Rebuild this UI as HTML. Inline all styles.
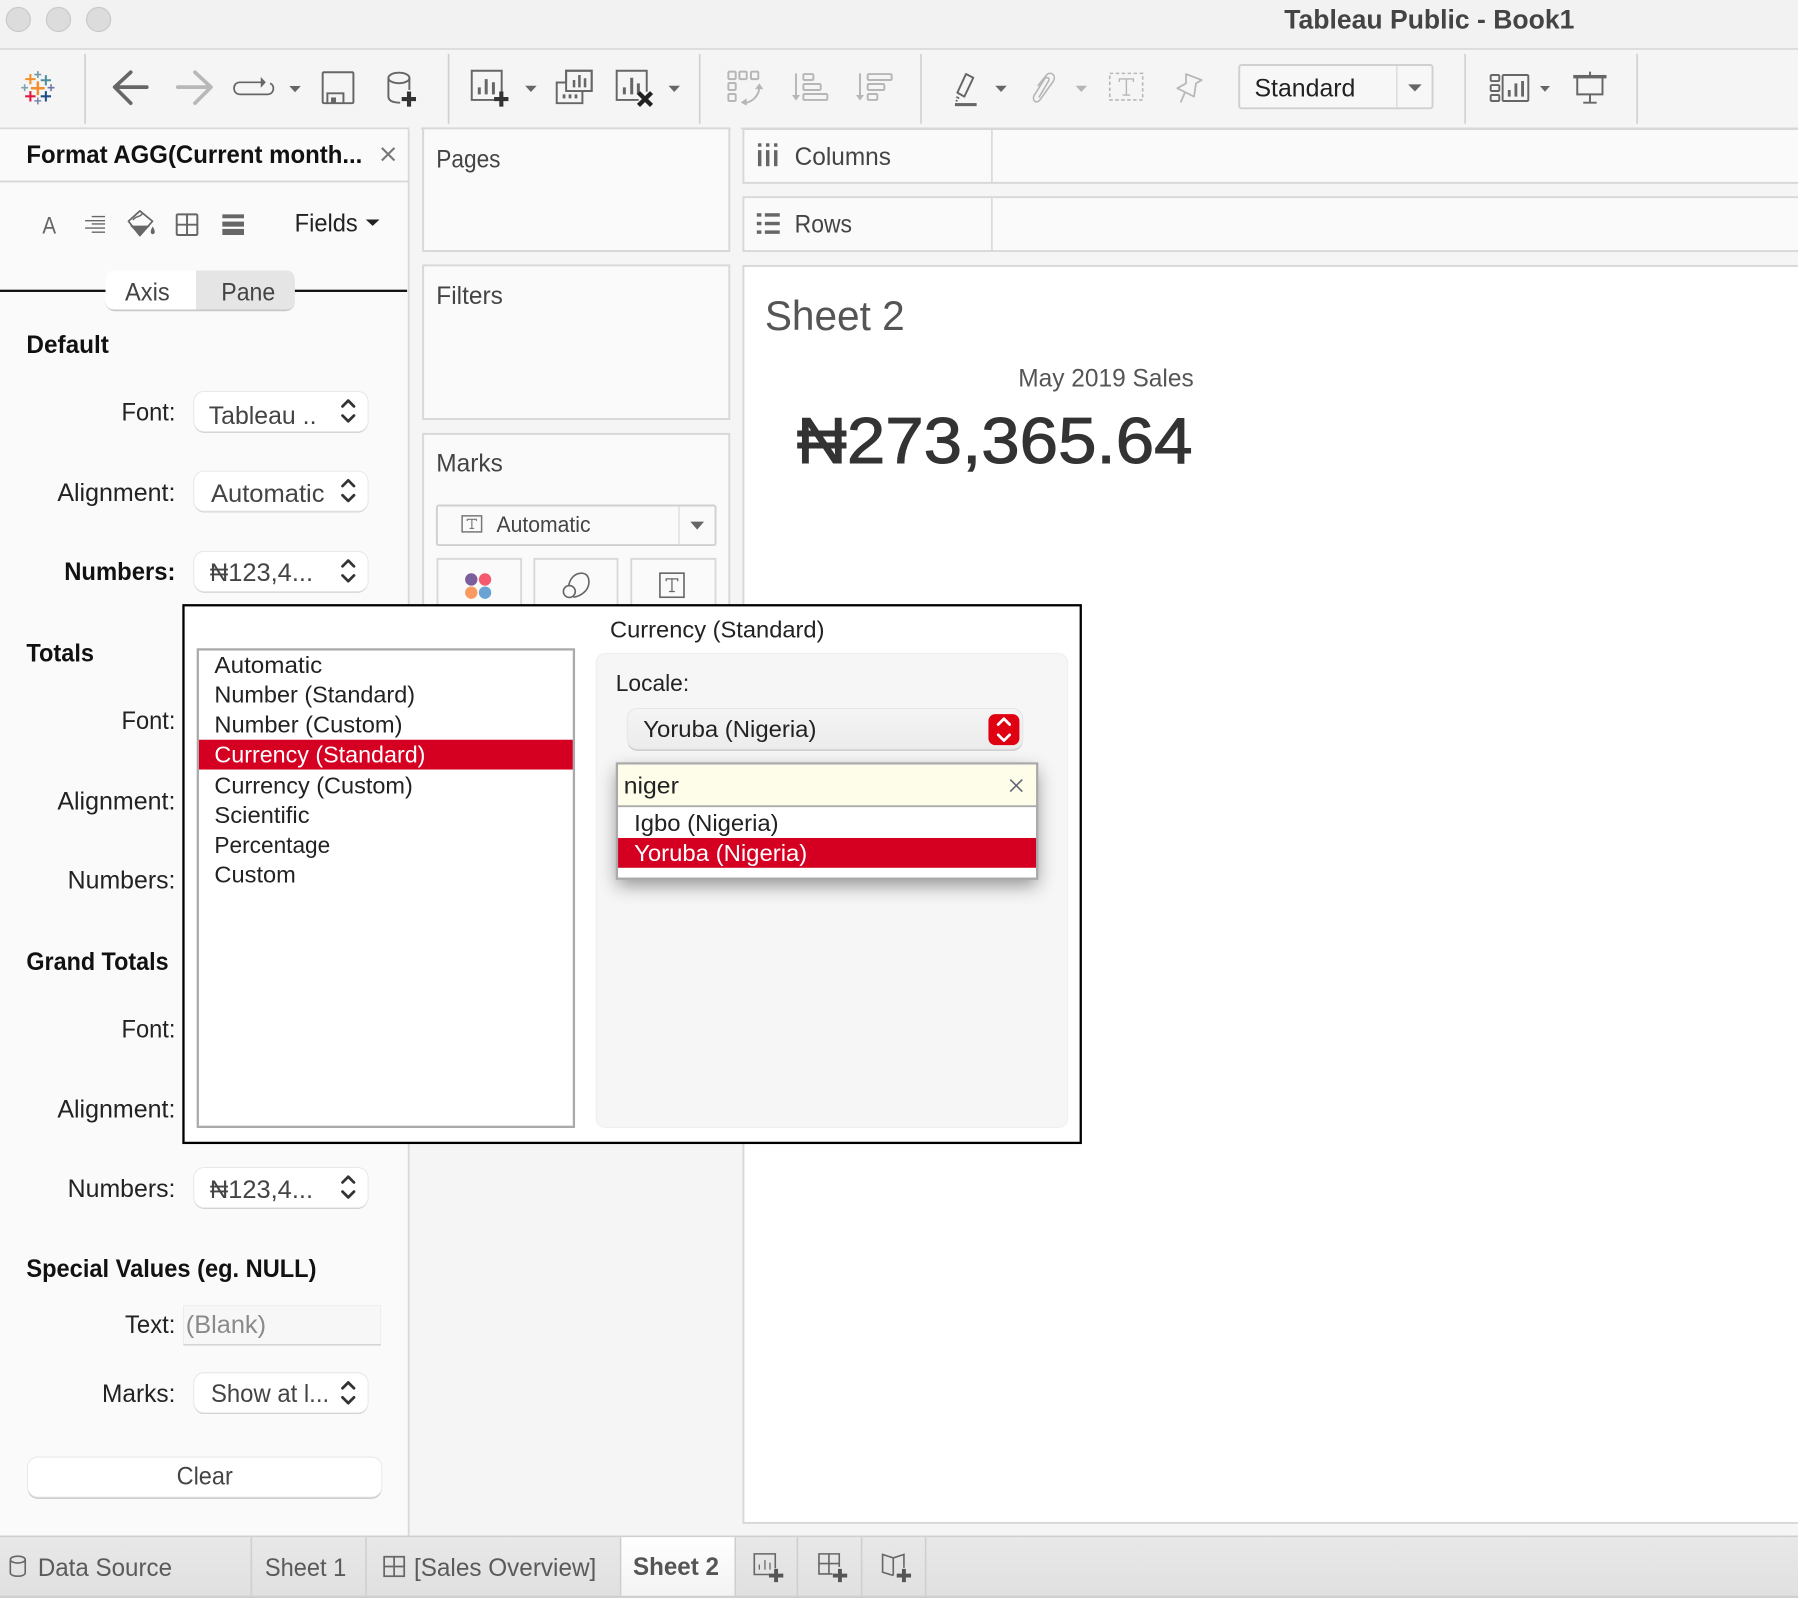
<!DOCTYPE html>
<html lang="en">
<head>
<meta charset="utf-8">
<title>Tableau Public - Book1</title>
<style>
html,body{margin:0;padding:0;background:#f5f5f5;}
svg{display:block;}
text{font-family:"Liberation Sans","DejaVu Sans",sans-serif;font-size:22px;fill:#333;}
.b{font-weight:700;fill:#111;}
.l{fill:#222;}
.v{fill:#444;}
.d{font-size:20.5px;fill:#222;}
.t{fill:#5a5a5a;}
</style>
</head>
<body>
<svg xmlns="http://www.w3.org/2000/svg" width="1798" height="1598" viewBox="0 0 1568 1394" preserveAspectRatio="none">
<defs>
  <linearGradient id="tb" x1="0" y1="0" x2="0" y2="1"><stop offset="0" stop-color="#e8e8e8"/><stop offset="1" stop-color="#e0e0e0"/></linearGradient>
  <linearGradient id="ac" x1="0" y1="0" x2="0" y2="1"><stop offset="0" stop-color="#fff"/><stop offset="1" stop-color="#f3f3f3"/></linearGradient>
  <linearGradient id="loc" x1="0" y1="0" x2="0" y2="1"><stop offset="0" stop-color="#f4f4f4"/><stop offset="1" stop-color="#ececec"/></linearGradient>
  <filter id="sh" x="-15%" y="-20%" width="130%" height="160%"><feDropShadow dx="0" dy="6" stdDeviation="8" flood-color="#000" flood-opacity=".4"/></filter>
  <g id="chev" fill="none" stroke="#333" stroke-width="2.400" stroke-linecap="round" stroke-linejoin="round"><path d="M-5 -4L0 -9L5 -4"/><path d="M-5 4L0 9L5 4"/></g>
  <g id="sel"><rect x="169" y="1" width="152" height="35" rx="9" fill="#c9c9c9"/><rect x="169" y="0" width="152" height="35" rx="9" fill="#fff" stroke="#e6e6e6" stroke-width=".8"/></g>
</defs>

<!-- base -->
<rect width="1568" height="1394" fill="#f5f5f5"/>
<rect width="1568" height="42" fill="#f2f2f2"/>
<rect y="42" width="1568" height="1.400" fill="#d8d8d8"/>
<circle cx="16" cy="17" r="10.500" fill="#dcdcdc" stroke="#c8c8c8"/>
<circle cx="51" cy="17" r="10.500" fill="#dcdcdc" stroke="#c8c8c8"/>
<circle cx="86" cy="17" r="10.500" fill="#dcdcdc" stroke="#c8c8c8"/>
<text x="1120" y="25" class="b" style="fill:#444;font-size:23px" textLength="253" lengthAdjust="spacingAndGlyphs">Tableau Public - Book1</text>

<!-- toolbar separators -->
<g fill="#d0d0d0">
<rect x="73.500" y="47" width="1.400" height="61"/><rect x="390.500" y="47" width="1.400" height="61"/><rect x="609.500" y="47" width="1.400" height="61"/><rect x="802.500" y="47" width="1.400" height="61"/><rect x="1277" y="47" width="1.400" height="61"/><rect x="1427" y="47" width="1.400" height="61"/>
</g>

<!-- logo -->
<g fill="none">
  <path d="M33 71V83M27 77H39" stroke="#f28e2b" stroke-width="2.200"/>
  <path d="M26.500 64.500V73.500M22 69H31" stroke="#f28e2b" stroke-width="1.800"/>
  <path d="M40 65.500V74.500M35.500 70H44.500" stroke="#4e8fa0" stroke-width="1.800"/>
  <path d="M26.500 79.500V88.500M22 84H31" stroke="#e0173f" stroke-width="1.800"/>
  <path d="M40 79.500V88.500M35.500 84H44.500" stroke="#1f4f8b" stroke-width="1.800"/>
  <path d="M33 62V68M30 65H36" stroke="#6f9aaa" stroke-width="1.400"/>
  <path d="M21.500 73.500V79.500M18.500 76.500H24.500" stroke="#7ba3b0" stroke-width="1.400"/>
  <path d="M44.500 73.500V79.500M41.500 76.500H47.500" stroke="#6f75a8" stroke-width="1.400"/>
  <path d="M33 85V91M30 88H36" stroke="#7d84ad" stroke-width="1.400"/>
</g>

<!-- toolbar icons: dark -->
<g fill="none" stroke="#666" stroke-width="1.700">
  <path d="M128 76H101M114 63L100 76L114 90" stroke-width="3.200" stroke-linecap="round" stroke-linejoin="round"/>
  <path d="M155 76H183M170 63L184 76L170 90" stroke="#b8b8b8" stroke-width="3.200" stroke-linecap="round" stroke-linejoin="round"/>
  <path d="M229 71.800H209.300C206 71.800 204.100 74 204.100 77C204.100 80 206 82.300 209.300 82.300H233.500C236.500 82.300 238.400 80 238.400 77C238.400 75 237.500 73.500 235.500 72.700" stroke-width="1.500"/>
  <rect x="281.400" y="63" width="26.800" height="27" rx="1"/>
  <path d="M285.500 90V81.400H299.500V90"/>
  <ellipse cx="347.900" cy="68" rx="9.200" ry="4.600"/><path d="M338.700 68V84C338.700 87.500 342 89.600 349 89.600M357 68V78.500"/>
  <path d="M431 87.200H411.400V61.700H437.500V81"/>
  <path d="M493.700 72V61.700H516V79.400H507.900"/>
  <path d="M493.700 72H485.500V90H507.900V79.400"/>
  <rect x="493.700" y="61.700" width="22.300" height="17.700"/>
  <path d="M557 87.200H537.800V61.700H564V80"/>
</g>
<path d="M227.400 67.200L231.800 71.800L227.400 76.500Z" fill="#666"/>
<rect x="288.700" y="85" width="4.300" height="5" fill="#666"/>
<g stroke="#666" stroke-width="2.600" fill="none">
  <path d="M418 82.300V76.200M424 82.300V69M430.300 82.300V71.800"/>
  <path d="M500.600 76.200V69.800M505.300 76.200V65.400M510.200 76.200V68.300" stroke-width="2.200"/>
  <path d="M491.900 82.300V85.800M497.100 82.300V85.800M502.300 82.300V85.800" stroke-width="2.400"/>
  <path d="M544.500 82.300V76.200M550.900 82.300V67.800M556.700 82.300V72.700"/>
</g>
<path d="M356.700 79.800V93M350.300 86.400H362.800" stroke="#333" stroke-width="3.600"/>
<path d="M437.200 79.800V93M430.900 86.400H443.400" stroke="#333" stroke-width="3.600"/>
<path d="M556.800 80.800L568.200 92M568.200 80.800L556.800 92" stroke="#222" stroke-width="3.800"/>
<g fill="#666">
  <path d="M252.300 75H262.300L257.300 80.500Z"/><path d="M458 74.800H468L463 80.300Z"/><path d="M583 74.800H593L588 80.300Z"/><path d="M868 74.800H878L873 80.300Z"/><path d="M1343 75H1351.700L1347.300 80Z"/>
  <path d="M938 74.800H948L943 80.300Z" fill="#b5b5b5"/>
</g>
<!-- toolbar icons: disabled -->
<g fill="none" stroke="#b6b6b6" stroke-width="1.700">
  <rect x="635.200" y="62.500" width="6.400" height="6.500" rx="1"/><rect x="644.800" y="62.500" width="6.400" height="6.500" rx="1"/><rect x="654.900" y="62.500" width="6.400" height="6.500" rx="1"/><rect x="635.200" y="72.400" width="6.400" height="6.100" rx="1"/><rect x="635.200" y="82" width="6.400" height="6.100" rx="1"/>
  <path d="M662.200 76C662 83 657 88.500 649.700 90"/>
  <path d="M694.200 64V84"/><rect x="700.600" y="64.600" width="8.700" height="5.200" rx="1"/><rect x="700.600" y="73.300" width="15.100" height="5.200" rx="1"/><rect x="700.600" y="82" width="20.900" height="5.200" rx="1"/>
  <path d="M750 64V84"/><rect x="756.700" y="64.600" width="20.900" height="5.200" rx="1"/><rect x="756.700" y="73.300" width="14.500" height="5.200" rx="1"/><rect x="756.700" y="82" width="8.400" height="5.200" rx="1"/>
  <path d="M906 85L914.500 70.500C916 67.500 912 66.500 910.500 69.500L902 83C899.500 88 904 91 907 87L918.500 71C921.500 66 917 62 913 65L905 75" stroke-width="1.400"/>
  <rect x="967.800" y="64" width="28.700" height="23.200" stroke-dasharray="3 2.200" stroke-width="1.400"/>
  <path d="M976.200 71.500V68.900H988.400V71.500M982.300 68.900V82.900M979 82.900H985.600" stroke-width="1.200"/>
  <path d="M1034.300 64.600L1048 69.800L1043 72.700L1041.300 84.300L1026.700 77L1034.300 72.700Z" stroke-width="1.500" stroke-linejoin="round"/>
  <path d="M1033.400 80.600L1029.600 89.300" stroke-width="1.500"/>
</g>
<path d="M662.200 72.700L658.400 77.700H665.700Z" fill="#b6b6b6"/><path d="M645.900 89.300L651.200 85.800V92.200Z" fill="#b6b6b6"/>
<path d="M694.200 87.800L690.700 82.900H697.700Z" fill="#b6b6b6"/><path d="M750 87.800L746.500 82.900H753.500Z" fill="#b6b6b6"/>
<!-- highlighter -->
<path d="M842.400 64.600L848.800 67.800L841 84.300L834.900 80.800Z" fill="none" stroke="#666" stroke-width="1.700" stroke-linejoin="round"/>
<path d="M834 84.500L836.500 85.800M833.500 87.500L835 88.200" stroke="#666" stroke-width="1.500"/>
<rect x="832.800" y="89.900" width="18.900" height="2.700" fill="#666"/>
<!-- show me -->
<g fill="none" stroke="#666" stroke-width="1.700">
  <rect x="1300" y="65.400" width="7.500" height="5.300" rx="1"/><rect x="1300" y="74.200" width="7.500" height="5.200" rx="1"/><rect x="1300" y="82.900" width="7.500" height="5.200" rx="1"/>
  <rect x="1310.400" y="65.400" width="22.400" height="22.700" rx="1"/>
  <path d="M1316.200 84.300V78.500M1322 84.300V72.700M1327.800 84.300V70.700" stroke-width="2.500"/>
  <path d="M1375.500 68V82.300H1397.500V68"/><path d="M1386.600 82.300V89.600M1380.700 89.600H1392.400"/>
</g>
<rect x="1372" y="65.400" width="29" height="3" fill="#666"/><rect x="1385.800" y="62.500" width="1.700" height="3" fill="#666"/>
<!-- Standard -->
<rect x="1080.700" y="56.700" width="168.600" height="37.800" rx="2" fill="#f7f7f7" stroke="#d0d0d0" stroke-width="1.700"/>
<rect x="1217.500" y="57.500" width="1.300" height="36.500" fill="#dcdcdc"/>
<path d="M1228 73.600H1239.800L1233.900 79.800Z" fill="#666"/>
<text x="1094" y="84" class="l" textLength="88" lengthAdjust="spacingAndGlyphs">Standard</text>

<!-- toolbar bottom / panel tops -->
<g fill="#d8d8d8"><rect x="0" y="111.200" width="357" height="1.600"/><rect x="367" y="111.200" width="270" height="1.600"/><rect x="646" y="111.200" width="922" height="1.600"/></g>

<!-- format pane -->
<rect x="0" y="112.800" width="356" height="1227" fill="#fafafa"/>
<rect x="355.600" y="113" width="1.600" height="1227" fill="#d8d8d8"/>
<rect x="0" y="157.500" width="356" height="1.600" fill="#d8d8d8"/>
<text x="23" y="142" class="b" textLength="293" lengthAdjust="spacingAndGlyphs">Format AGG(Current month...</text>
<path d="M333 129L344 140M344 129L333 140" stroke="#777" stroke-width="1.800"/>
<text x="37" y="203.500" style="font-size:21px;fill:#666" textLength="12" lengthAdjust="spacingAndGlyphs">A</text>
<path d="M80 188.900H91.600M74.200 192.500H91.600M80 195.400H91.600M74.200 199H91.600M80 202.600H91.600" stroke="#666" fill="none" stroke-width="1.200"/>
<path d="M112 193L122 184L133 193L122 205.500Z" fill="#fafafa" stroke="#666" stroke-width="1.500" stroke-linejoin="round"/>
<path d="M113.400 196.800H130.900L122.100 205.500Z" fill="#666"/>
<path d="M116 192C118 188 122 190 124 186.500" fill="none" stroke="#666" stroke-width="1.300"/>
<path d="M133.200 197.700C131 201 130.800 204.300 133.200 204.300C135.600 204.300 135.400 201 133.200 197.700Z" fill="#666"/>
<g fill="none" stroke="#666" stroke-width="1.700"><rect x="154.100" y="187" width="18" height="18" rx="1"/><path d="M163.100 187V205M154.100 196H172.100"/></g>
<g fill="#666"><rect x="193.900" y="187" width="18.900" height="3.400"/><rect x="193.900" y="193.300" width="18.900" height="4.400"/><rect x="193.900" y="199.700" width="18.900" height="5.300"/></g>
<text x="257" y="202" class="l" textLength="55" lengthAdjust="spacingAndGlyphs">Fields</text>
<path d="M319 191.500H331L325 197Z" fill="#222"/>

<!-- axis/pane -->
<rect x="0" y="252.700" width="92" height="2" fill="#111"/><rect x="257" y="252.700" width="98" height="2" fill="#111"/>
<rect x="92" y="236.500" width="165" height="35" rx="8" fill="#c8c8c8"/>
<path d="M171 236H100Q92 236 92 244V262Q92 270 100 270H171Z" fill="#fff"/>
<path d="M171 236H249Q257 236 257 244V262Q257 270 249 270H171Z" fill="#e5e5e5"/>
<text x="109" y="262" class="v" textLength="39" lengthAdjust="spacingAndGlyphs">Axis</text>
<text x="193" y="262" class="v" textLength="47" lengthAdjust="spacingAndGlyphs">Pane</text>

<text x="23" y="308" class="b" textLength="72" lengthAdjust="spacingAndGlyphs">Default</text>
<text x="106" y="367" class="l" textLength="47" lengthAdjust="spacingAndGlyphs">Font:</text>
<use href="#sel" y="341.500"/><text x="182" y="370" class="v" textLength="94" lengthAdjust="spacingAndGlyphs">Tableau ..</text><use href="#chev" x="303.700" y="358.500"/>
<text x="50" y="437" class="l" textLength="103" lengthAdjust="spacingAndGlyphs">Alignment:</text>
<use href="#sel" y="411"/><text x="184" y="438" class="v" textLength="99" lengthAdjust="spacingAndGlyphs">Automatic</text><use href="#chev" x="303.700" y="428"/>
<text x="56" y="506" class="b" textLength="97" lengthAdjust="spacingAndGlyphs">Numbers:</text>
<use href="#sel" y="481"/><text x="183" y="507" class="v" textLength="90" lengthAdjust="spacingAndGlyphs">₦123,4...</text><use href="#chev" x="303.700" y="498"/>

<text x="23" y="577" class="b" textLength="59" lengthAdjust="spacingAndGlyphs">Totals</text>
<text x="106" y="636" class="l" textLength="47" lengthAdjust="spacingAndGlyphs">Font:</text>
<text x="50" y="706" class="l" textLength="103" lengthAdjust="spacingAndGlyphs">Alignment:</text>
<text x="59" y="775" class="l" textLength="94" lengthAdjust="spacingAndGlyphs">Numbers:</text>
<text x="23" y="846" class="b" textLength="124" lengthAdjust="spacingAndGlyphs">Grand Totals</text>
<text x="106" y="905" class="l" textLength="47" lengthAdjust="spacingAndGlyphs">Font:</text>
<text x="50" y="975" class="l" textLength="103" lengthAdjust="spacingAndGlyphs">Alignment:</text>
<text x="59" y="1044" class="l" textLength="94" lengthAdjust="spacingAndGlyphs">Numbers:</text>
<use href="#sel" y="1018.500"/><text x="183" y="1045" class="v" textLength="90" lengthAdjust="spacingAndGlyphs">₦123,4...</text><use href="#chev" x="303.700" y="1035.500"/>

<text x="23" y="1114" class="b" textLength="253" lengthAdjust="spacingAndGlyphs">Special Values (eg. NULL)</text>
<text x="109" y="1163" class="l" textLength="44" lengthAdjust="spacingAndGlyphs">Text:</text>
<rect x="160" y="1139" width="172" height="34" fill="#f7f7f7" stroke="#ececec" stroke-width=".8"/><rect x="160" y="1172.700" width="172" height="1" fill="#c8c8c8"/>
<text x="162" y="1163" style="fill:#8a8a8a" textLength="70" lengthAdjust="spacingAndGlyphs">(Blank)</text>
<text x="89" y="1223" class="l" textLength="64" lengthAdjust="spacingAndGlyphs">Marks:</text>
<use href="#sel" y="1197.500"/><text x="184" y="1223" class="v" textLength="103" lengthAdjust="spacingAndGlyphs">Show at l...</text><use href="#chev" x="303.700" y="1215"/>
<rect x="24" y="1272" width="309" height="35.500" rx="9" fill="#c9c9c9"/><rect x="24" y="1271" width="309" height="35" rx="9" fill="#fff" stroke="#e6e6e6" stroke-width=".8"/>
<text x="154" y="1295" class="v" textLength="49" lengthAdjust="spacingAndGlyphs">Clear</text>

<!-- shelves -->
<g fill="#fafafa" stroke="#d8d8d8" stroke-width="1.700">
  <rect x="369" y="112" width="267" height="107"/>
  <rect x="369" y="231.500" width="267" height="134"/>
  <rect x="369" y="378.500" width="267" height="170"/>
  <path d="M1570 112.500H648.300V159.500H1570Z"/>
  <path d="M1570 172H648.300V219H1570Z"/>
</g>
<rect x="864.300" y="113" width="1.400" height="46" fill="#d8d8d8"/><rect x="864.300" y="173" width="1.400" height="46" fill="#d8d8d8"/>
<text x="380.500" y="146" class="v" textLength="56" lengthAdjust="spacingAndGlyphs">Pages</text>
<text x="380.500" y="265" class="v" textLength="58" lengthAdjust="spacingAndGlyphs">Filters</text>
<text x="380.500" y="411.500" class="v" textLength="58" lengthAdjust="spacingAndGlyphs">Marks</text>
<g fill="#666"><rect x="661" y="125" width="3" height="3"/><rect x="668" y="125" width="3" height="3"/><rect x="675" y="125" width="3" height="3"/><rect x="661" y="131" width="3" height="14"/><rect x="668" y="131" width="3" height="14"/><rect x="675" y="131" width="3" height="14"/>
<rect x="660" y="186" width="4" height="3"/><rect x="667" y="186" width="13" height="3"/><rect x="660" y="193.500" width="4" height="3"/><rect x="667" y="193.500" width="13" height="3"/><rect x="660" y="201" width="4" height="3"/><rect x="667" y="201" width="13" height="3"/></g>
<text x="693" y="144" class="v" textLength="84" lengthAdjust="spacingAndGlyphs">Columns</text>
<text x="693" y="203" class="v" textLength="50" lengthAdjust="spacingAndGlyphs">Rows</text>

<!-- marks controls -->
<rect x="381" y="441" width="243" height="34.500" rx="1.500" fill="#fafafa" stroke="#d0d0d0" stroke-width="1.700"/>
<rect x="591.500" y="442" width="1.300" height="33" fill="#e0e0e0"/>
<rect x="403" y="450" width="17" height="14" fill="none" stroke="#777" stroke-width="1.300"/>
<path d="M407.500 454.500V453H415.500V454.500M411.500 453V461M409.500 461H413.500" stroke="#777" stroke-width="1" fill="none"/>
<text x="433" y="464" style="font-size:19px;fill:#444" textLength="82" lengthAdjust="spacingAndGlyphs">Automatic</text>
<path d="M602 455H614L608 462Z" fill="#666"/>
<g fill="#fafafa" stroke="#d8d8d8" stroke-width="1.600"><rect x="381.500" y="487.500" width="73" height="60"/><rect x="466" y="487.500" width="72.500" height="60"/><rect x="550.500" y="487.500" width="73.500" height="60"/></g>
<circle cx="411" cy="505.500" r="5.400" fill="#7b5e9a"/><circle cx="423" cy="505.500" r="5.400" fill="#f4596f"/><circle cx="411" cy="517" r="5.400" fill="#f99b61"/><circle cx="423" cy="517" r="5.400" fill="#6aa2d3"/>
<g fill="none" stroke="#666" stroke-width="1.400"><path d="M496 511C497 504 502 500 507 500C512 500 514 504 513.500 509C513 515 507 520 500 521"/><circle cx="496.500" cy="516" r="5.200"/>
<rect x="575.500" y="500" width="21" height="21"/><path d="M581 507V505H591V507M586 505V516M583.500 516H588.500" stroke-width="1.100"/></g>

<!-- view -->
<rect x="648.300" y="232" width="921.700" height="1096.500" fill="#fff" stroke="#d8d8d8" stroke-width="1.700"/>
<text x="667" y="288" style="font-size:36px;fill:#555" textLength="122" lengthAdjust="spacingAndGlyphs">Sheet 2</text>
<text x="888" y="337" style="fill:#555" textLength="153" lengthAdjust="spacingAndGlyphs">May 2019 Sales</text>
<text x="695" y="404" style="font-size:57px;fill:#333;stroke:#333;stroke-width:.9" textLength="345" lengthAdjust="spacingAndGlyphs">₦273,365.64</text>

<!-- dialog -->
<rect x="160" y="528" width="782.500" height="469" fill="#fff" stroke="#000" stroke-width="2"/>
<text x="532" y="556" class="d" textLength="187" lengthAdjust="spacingAndGlyphs">Currency (Standard)</text>
<rect x="172.500" y="566.500" width="328" height="416.500" fill="#fff" stroke="#aaa" stroke-width="2"/>
<rect x="173.500" y="645.300" width="326" height="26" fill="#d50021"/>
<text x="187" y="587" class="d" textLength="94" lengthAdjust="spacingAndGlyphs">Automatic</text>
<text x="187" y="613" class="d" textLength="175" lengthAdjust="spacingAndGlyphs">Number (Standard)</text>
<text x="187" y="639" class="d" textLength="164" lengthAdjust="spacingAndGlyphs">Number (Custom)</text>
<text x="187" y="665" class="d" style="fill:#fff" textLength="184" lengthAdjust="spacingAndGlyphs">Currency (Standard)</text>
<text x="187" y="692" class="d" textLength="173" lengthAdjust="spacingAndGlyphs">Currency (Custom)</text>
<text x="187" y="718" class="d" textLength="83" lengthAdjust="spacingAndGlyphs">Scientific</text>
<text x="187" y="744" class="d" textLength="101" lengthAdjust="spacingAndGlyphs">Percentage</text>
<text x="187" y="770" class="d" textLength="71" lengthAdjust="spacingAndGlyphs">Custom</text>
<rect x="520" y="570" width="411" height="413.500" rx="8" fill="#f6f6f6" stroke="#efefef"/>
<text x="537" y="603" class="d" textLength="64" lengthAdjust="spacingAndGlyphs">Locale:</text>
<rect x="547" y="619" width="345" height="36" rx="9" fill="#c9c9c9"/>
<rect x="547" y="618" width="345" height="35.500" rx="9" fill="url(#loc)" stroke="#e4e4e4" stroke-width=".8"/>
<text x="561" y="643" class="d" textLength="151" lengthAdjust="spacingAndGlyphs">Yoruba (Nigeria)</text>
<rect x="862" y="623" width="27" height="27" rx="6" fill="#df0011"/>
<path d="M870.500 632L875.500 627L880.500 632M870.500 641L875.500 646L880.500 641" fill="none" stroke="#fff" stroke-width="2.400" stroke-linecap="round" stroke-linejoin="round"/>
<rect x="538" y="666" width="366.500" height="100.500" fill="#fff" filter="url(#sh)"/>
<rect x="538" y="666" width="366.500" height="100.500" fill="#fff" stroke="#aaa" stroke-width="2"/>
<rect x="539" y="667" width="364.500" height="36" fill="#fdfde9"/>
<rect x="539" y="702.500" width="364.500" height="1.600" fill="#aaa"/>
<text x="544" y="692" class="d" textLength="48" lengthAdjust="spacingAndGlyphs">niger</text>
<path d="M881 680L891.500 690.500M891.500 680L881 690.500" stroke="#667" stroke-width="1.400"/>
<text x="553" y="725" class="d" textLength="126" lengthAdjust="spacingAndGlyphs">Igbo (Nigeria)</text>
<rect x="539" y="731" width="364.500" height="26" fill="#d50021"/>
<text x="553" y="751" class="d" style="fill:#fff" textLength="151" lengthAdjust="spacingAndGlyphs">Yoruba (Nigeria)</text>

<!-- tab bar -->
<rect x="0" y="1340" width="1568" height="54" fill="url(#tb)"/>
<rect x="0" y="1339.500" width="1568" height="1.400" fill="#d0d0d0"/>
<rect x="0" y="1392" width="1568" height="2" fill="#cfcfcf"/>
<rect x="541" y="1341" width="100" height="51" fill="url(#ac)"/>
<g fill="#cfcfcf"><rect x="218.500" y="1341" width="1.400" height="51"/><rect x="318.500" y="1341" width="1.400" height="51"/><rect x="540.500" y="1341" width="1.400" height="51"/><rect x="640.500" y="1341" width="1.400" height="51"/><rect x="694.700" y="1341" width="1.400" height="51"/><rect x="750.700" y="1341" width="1.400" height="51"/><rect x="806.500" y="1341" width="1.400" height="51"/></g>
<ellipse cx="15.500" cy="1360.500" rx="6.500" ry="3" fill="none" stroke="#666" stroke-width="1.400"/>
<path d="M9 1360.500V1372C9 1376 22 1376 22 1372V1360.500" fill="none" stroke="#666" stroke-width="1.400"/>
<text x="33" y="1375" class="t" textLength="117" lengthAdjust="spacingAndGlyphs">Data Source</text>
<text x="231" y="1375" class="t" textLength="71" lengthAdjust="spacingAndGlyphs">Sheet 1</text>
<g fill="none" stroke="#666" stroke-width="1.500"><rect x="335" y="1358" width="17.500" height="17"/><path d="M343.700 1358V1375M335 1366.500H352.500"/></g>
<text x="361" y="1375" class="t" textLength="159" lengthAdjust="spacingAndGlyphs">[Sales Overview]</text>
<text x="552" y="1374" class="b" style="fill:#555" textLength="75" lengthAdjust="spacingAndGlyphs">Sheet 2</text>
<g fill="none" stroke="#666" stroke-width="1.400">
  <path d="M671 1373.500H657.800V1355.500H676.100V1368"/><path d="M662.200 1369.200V1364.800M667.100 1369.200V1361M671.500 1369.200V1363.300" stroke-width="1.100"/>
  <path d="M726 1373H714.200V1355.500H731.900V1367M722.900 1355.500V1373M714.200 1364H731.900"/>
  <path d="M779 1374.400L769.700 1371.500V1356L779 1359L788.300 1356V1367.700M779 1359V1374.400"/>
</g>
<path d="M676.800 1368.600V1380.200M670.600 1374.400H683.100" stroke="#555" stroke-width="3.400"/>
<path d="M732.500 1368.600V1380.200M726.300 1374.400H738.800" stroke="#555" stroke-width="3.400"/>
<path d="M788.300 1368.600V1380.200M782 1374.400H794.500" stroke="#555" stroke-width="3.400"/>
</svg>
</body>
</html>
